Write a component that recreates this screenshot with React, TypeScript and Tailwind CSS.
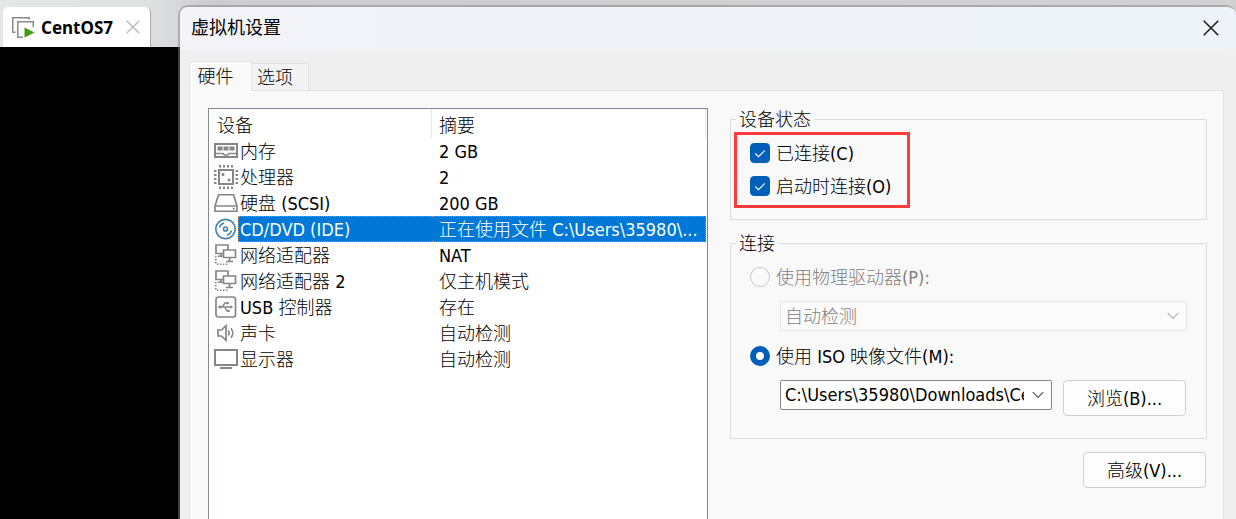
import React, { useState } from "react";
import type { ReactNode } from "react";

function Glyph({ children, className = "text-[#868686]" }: { children: ReactNode; className?: string }) {
  return (
    <svg
      viewBox="0 0 24 26"
      className={`h-[26px] w-6 shrink-0 ${className}`}
      fill="none"
      stroke="currentColor"
      strokeWidth="1.7"
      aria-hidden="true"
    >
      {children}
    </svg>
  );
}

const MemoryIcon = () => (
  <Glyph>
    <path strokeWidth="2" d="M1 6h22v13H1z" />
    <path d="M1 15.500h8l1.500 1.500h3l1.500-1.500h8" />
    <path strokeWidth="2" d="M4.500 9.500h3v2h-3zM10.500 9.500h3v2h-3zM16.500 9.500h3v2h-3z" />
  </Glyph>
);

const CpuIcon = () => (
  <Glyph>
    <path strokeWidth="2" d="M5 6h14v14H5z" />
    <path strokeWidth="2.500" strokeDasharray="2 2" d="M5 2.250h14M5 23.750h14M1.250 6v14M22.750 6v14" />
    <circle cx="9" cy="10.500" r="1.500" fill="currentColor" stroke="none" />
    <circle cx="15" cy="16" r="1.500" fill="currentColor" stroke="none" />
  </Glyph>
);

const DiskIcon = () => (
  <Glyph>
    <path d="M4.500 4.750h15L23 16v5.250H1V16zM1 16h22" strokeLinejoin="round" />
    <path d="M18.800 18.750h2" />
  </Glyph>
);

const DiscIcon = () => (
  <Glyph className="text-[#4a84b0]">
    <circle cx="11.500" cy="13" r="9.700" />
    <circle cx="11.500" cy="13" r="2" strokeWidth="1.700" />
    <path strokeWidth="1.500" d="M5.500 11.500a6.200 6.200 0 0 1 4.500-4.600M17.500 14.500a6.200 6.200 0 0 1-4.500 4.600" />
  </Glyph>
);

const NetworkIcon = () => (
  <Glyph>
    <path d="M2 3h12v8.500H2zM7 11.500v3M4 14.250h4.500" />
    <path fill="white" d="M9.500 8h12v7.500h-12z" />
    <path d="M15.500 15.500v4M12 19.500h7" />
    <path strokeDasharray="1.500 1.500" d="M1.750 14v8.500M3 22.250h12" />
  </Glyph>
);

const UsbIcon = () => (
  <Glyph>
    <rect x="2" y="3" width="19.500" height="20" rx="2.500" />
    <path strokeWidth="1.300" d="M5.500 13h12M8 13l3-4h2M10.500 13l2.500 4h2" />
    <circle cx="5.800" cy="13" r="1.600" fill="currentColor" stroke="none" />
    <path fill="currentColor" stroke="none" d="M12.500 8h2.200v2.200h-2.200zM13.500 15.800h2.200V18h-2.200zM16.500 11l2.500 2-2.500 2z" />
  </Glyph>
);

const SoundIcon = () => (
  <Glyph>
    <path d="M4 10h3.500L12 5.750v14.500L7.500 16H4z" />
    <path strokeWidth="1.500" d="M14.300 10.500q1.700 2.500 0 5M17 8.200q3.500 4.800 0 9.600" />
  </Glyph>
);

const DisplayIcon = () => (
  <Glyph>
    <path strokeWidth="2" d="M1 4h22v15H1z" />
    <path strokeWidth="2" d="M6 22h12" />
  </Glyph>
);

const devices: { name: string; summary: string; icon: ReactNode }[] = [
  { name: "内存", summary: "2 GB", icon: <MemoryIcon /> },
  { name: "处理器", summary: "2", icon: <CpuIcon /> },
  { name: "硬盘 (SCSI)", summary: "200 GB", icon: <DiskIcon /> },
  { name: "CD/DVD (IDE)", summary: "正在使用文件 C:\\Users\\35980\\...", icon: <DiscIcon /> },
  { name: "网络适配器", summary: "NAT", icon: <NetworkIcon /> },
  { name: "网络适配器 2", summary: "仅主机模式", icon: <NetworkIcon /> },
  { name: "USB 控制器", summary: "存在", icon: <UsbIcon /> },
  { name: "声卡", summary: "自动检测", icon: <SoundIcon /> },
  { name: "显示器", summary: "自动检测", icon: <DisplayIcon /> },
];

function DeviceTable() {
  const [selected, setSelected] = useState(3);
  return (
    <div className="min-w-0 border border-b-0 border-[#828790] bg-white pr-px">
      <table className="w-full table-fixed border-separate border-spacing-0 text-left whitespace-nowrap">
        <thead>
          <tr className="h-[29px]">
            <th className="w-[223px] border-r border-[#e5e5e5] p-0 pl-2 pt-1 font-light">设备</th>
            <th className="border-r border-[#e5e5e5] p-0 pl-[7px] pt-1 font-light">摘要</th>
          </tr>
        </thead>
        <tbody>
          {devices.map((d, i) => {
            const on = i === selected;
            const fill = on
              ? "border-dotted border-[#e0893c] bg-[#0078d7] text-white"
              : "border-transparent";
            return (
              <tr key={i} onClick={() => setSelected(i)} aria-selected={on}>
                <td className="p-0">
                  <div className="flex h-[26px] pl-[5px]">
                    {d.icon}
                    <span className={`flex-1 border-y border-l pl-px leading-[26px] ${fill}`}>{d.name}</span>
                  </div>
                </td>
                <td className="p-0">
                  <div className={`h-[26px] truncate border-y border-r pl-[7px] leading-[26px] ${fill}`}>{d.summary}</div>
                </td>
              </tr>
            );
          })}
        </tbody>
      </table>
    </div>
  );
}

function Check({ label }: { label: string }) {
  return (
    <label className="flex h-5 items-center gap-[6px]">
      <span className="grid">
        <input
          type="checkbox"
          defaultChecked
          className="peer size-5 appearance-none rounded-[4px] border border-[#868686] bg-white [grid-area:1/1] checked:border-[#005fb8] checked:bg-[#005fb8]"
        />
        <svg
          viewBox="0 0 20 20"
          className="pointer-events-none invisible size-5 [grid-area:1/1] peer-checked:visible"
          fill="none"
          stroke="white"
          strokeWidth="1.1"
          aria-hidden="true"
        >
          <path d="M5.300 10.500l3.200 3.200 6.300-6.300" />
        </svg>
      </span>
      <span className="pt-0.5">{label}</span>
    </label>
  );
}

function Radio({ label, checked, disabled }: { label: string; checked?: boolean; disabled?: boolean }) {
  return (
    <label className="flex h-5 items-center gap-[6px] has-disabled:text-[#808080]">
      <input
        type="radio"
        name="source"
        defaultChecked={checked}
        disabled={disabled}
        className="size-5 appearance-none rounded-full border border-[#868686] bg-white checked:border-[6px] checked:border-[#005fb8] disabled:border-[#c8c8c8] disabled:bg-[#fbfbfb]"
      />
      <span className="pt-0.5">{label}</span>
    </label>
  );
}

function Picker({ label, value, disabled }: { label: string; value: string; disabled?: boolean }) {
  return (
    <span className="grid min-w-0 flex-1 items-center">
      <select
        aria-label={label}
        disabled={disabled}
        className="h-[30px] w-full appearance-none rounded-[2px] border border-[#868686] bg-white pr-[27px] pl-1 text-black [grid-area:1/1] disabled:border-[#e5e5e5] disabled:bg-[#fbfbfb] disabled:pt-0.5 disabled:text-[#808080] disabled:opacity-100"
      >
        <option>{value}</option>
      </select>
      <svg
        viewBox="0 0 12 8"
        className={`pointer-events-none mr-2 h-2 w-3 justify-self-end [grid-area:1/1] ${disabled ? "text-[#b0b0b0]" : "text-[#5a5a5a]"}`}
        fill="none"
        stroke="currentColor"
        strokeWidth="1.2"
        aria-hidden="true"
      >
        <path d="M.8 1.200L6 6.400l5.200-5.200" />
      </svg>
    </span>
  );
}

const buttonClass =
  "h-9 w-[123px] shrink-0 rounded-[4px] border border-[#d0d0d0] bg-[#fdfdfd] pt-0.5 text-black hover:bg-[#f3f8fd]";

export default function App() {
  return (
    <div className="flex min-h-screen items-stretch bg-black bg-[linear-gradient(90deg,#e4e6e8_0,#dfe0e2_150px,#cdcdcf_210px,#d2d2d2_100%)] bg-[length:100%_47px] bg-no-repeat font-['DejaVu_Sans_Condensed','Noto_Sans_CJK_SC',sans-serif] text-[18px] leading-6 text-black">
      <div className="w-[178px] shrink-0 pt-[7px] pl-[3px]">
        <div className="flex h-10 w-[148px] items-center rounded-t-[5px] border-r border-[#a8a8a8] bg-white pl-[9px]">
          <svg viewBox="0 0 24 24" className="size-6 shrink-0" fill="none" stroke="#8a8a8a" strokeWidth="1.500" aria-hidden="true">
            <path d="M3.500 17.250H.75V2.750h16.500V4.500" />
            <path d="M11 22.250H5.750V6.750h15.500V12" />
            <path d="M12.500 12.500l10 5-10 5z" fill="#3f9c10" stroke="none" />
          </svg>
          <span className="ml-[5px] flex-1 pt-0.5 font-['Noto_Sans',sans-serif] text-[17px] font-bold">CentOS7</span>
          <button type="button" aria-label="关闭标签" className="mr-[10px] text-[#bdbdbd]">
            <svg viewBox="0 0 14 14" className="size-[14px]" fill="none" stroke="currentColor" strokeWidth="1.500" aria-hidden="true">
              <path d="M.7.7l12.600 12.600M13.300.7L.7 13.300" />
            </svg>
          </button>
        </div>
      </div>

      <section
        role="dialog"
        aria-labelledby="title"
        className="mt-[5px] flex min-w-0 flex-1 flex-col overflow-hidden rounded-t-[10px] border-2 border-r-0 border-b-0 border-[#808080]/50 bg-[#efefef] bg-clip-padding"
      >
        <header className="flex h-[43px] items-center justify-between bg-linear-to-r from-[#f3f3f8] to-[#eef3fa] pr-[17px] pb-px pl-[11px]">
          <h1 id="title">虚拟机设置</h1>
          <button type="button" aria-label="关闭">
            <svg viewBox="0 0 16 16" className="size-4" fill="none" stroke="#1a1a1a" strokeWidth="1.500" aria-hidden="true">
              <path d="M.7.7l14.600 14.600M15.300.7L.7 15.300" />
            </svg>
          </button>
        </header>

        <div className="flex flex-1 flex-col pt-[11px] pr-3 pl-[9px] font-light">
          <div role="tablist" className="flex h-[29px] items-end">
            <button
              type="button"
              role="tab"
              aria-selected="true"
              className="z-10 -mb-px h-[30px] w-[63px] border border-b-0 border-[#e3e3e3] bg-[#f9f9f9] pr-[10px]"
            >
              硬件
            </button>
            <button
              type="button"
              role="tab"
              aria-selected="false"
              className="h-[27px] w-[57px] border border-b-0 border-l-0 border-[#e3e3e3] bg-[#f3f3f3] pt-0.5 pr-[10px]"
            >
              选项
            </button>
          </div>

          <div
            role="tabpanel"
            className="grid flex-1 grid-cols-[500fr_477fr] gap-[22px] border border-b-0 border-[#e3e3e3] bg-[#f9f9f9] pt-[17px] pr-4 pl-[18px]"
          >
            <DeviceTable />

            <div className="min-w-0">
              <fieldset className="h-[112px] border border-[#dcdcdc] pl-[3px]">
                <legend className="ml-0.5 h-[22px] px-[3px] leading-6">设备状态</legend>
                <div className="mt-0.5 flex h-[76px] w-[176px] flex-col gap-[13px] border-[3px] border-[#ff3b3b] pt-2 pl-[13px]">
                  <Check label="已连接(C)" />
                  <Check label="启动时连接(O)" />
                </div>
              </fieldset>

              <fieldset className="mt-3 h-[207px] border border-[#dcdcdc] px-[19px]">
                <legend className="-ml-[14px] h-[22px] px-[3px] leading-6">连接</legend>
                <div className="pt-[13px]">
                  <Radio label="使用物理驱动器(P):" disabled />
                </div>
                <div className="mt-[14px] flex pl-[30px]">
                  <Picker label="物理驱动器" value="自动检测" disabled />
                </div>
                <div className="mt-[15px]">
                  <Radio label="使用 ISO 映像文件(M):" checked />
                </div>
                <div className="mt-[14px] flex items-start gap-[11px] pr-px pl-[30px]">
                  <Picker label="ISO 映像文件" value="C:\Users\35980\Downloads\CentOS-7-x86_64-DVD.iso" />
                  <button type="button" className={buttonClass}>
                    浏览(B)...
                  </button>
                </div>
              </fieldset>

              <div className="mt-[13px] flex justify-end pr-px">
                <button type="button" className={buttonClass}>
                  高级(V)...
                </button>
              </div>
            </div>
          </div>
        </div>
      </section>
    </div>
  );
}
